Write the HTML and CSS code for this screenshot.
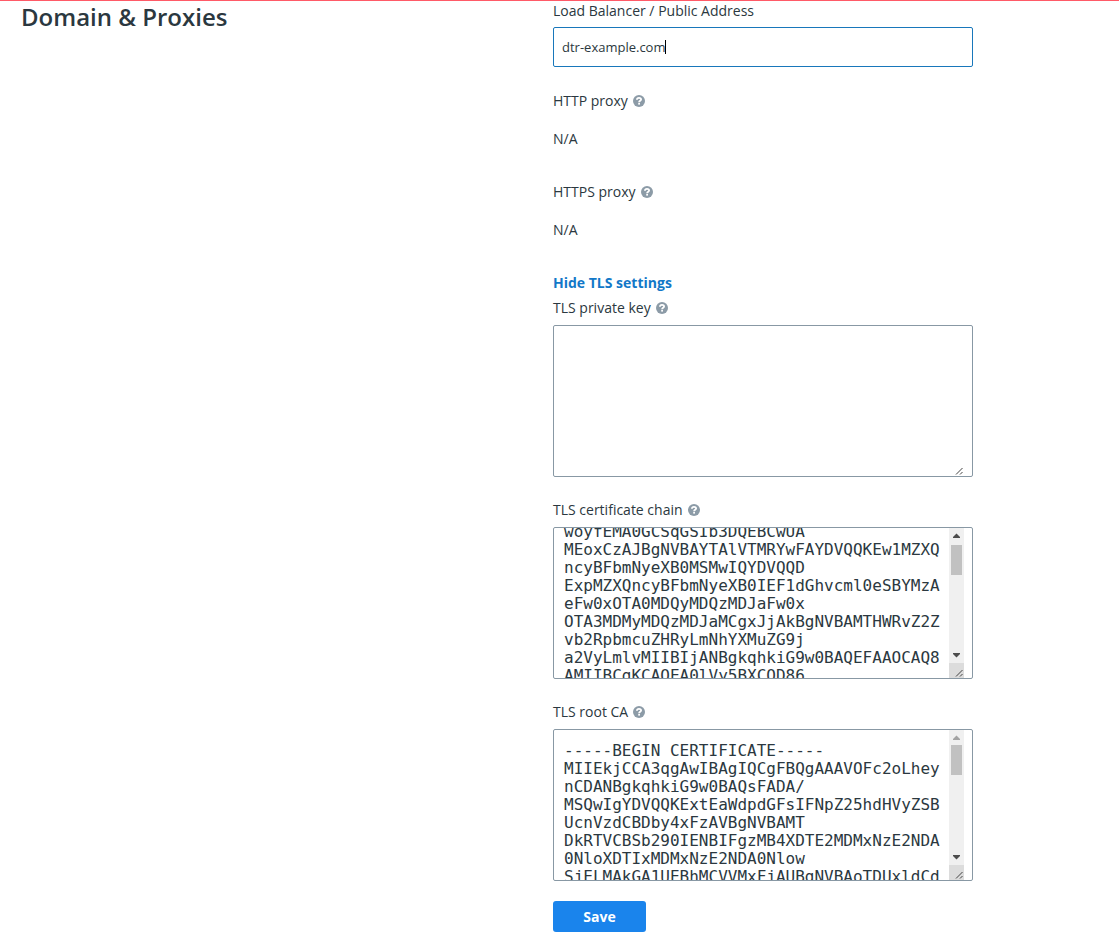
FILE: index.html
```html
<!DOCTYPE html>
<html lang="en">
<head>
<meta charset="utf-8">
<meta name="viewport" content="width=device-width, initial-scale=1">
<title>Domain &amp; Proxies</title>
<link rel="stylesheet" href="styles.css">
</head>
<body>
<svg class="sprite" aria-hidden="true">
  <symbol id="help" viewBox="0 0 12 12">
    <circle cx="6" cy="6" r="6" fill="#8c9ba7"/>
    <path d="M3.900 4.800C4 3.400 4.900 2.900 6 2.900c1.200 0 2.100.6 2.100 1.600 0 1.300-2 1.300-2 2.700" fill="none" stroke="#fff" stroke-width="1.800"/>
    <rect x="5.200" y="7.900" width="1.800" height="1.700" fill="#fff"/>
  </symbol>
  <symbol id="up" viewBox="0 0 15 15"><path d="M4 10h7v-1L7.500 5.500 4 9z"/></symbol>
  <symbol id="down" viewBox="0 0 15 15"><path d="M4 5h7v1L7.500 9.500 4 6z"/></symbol>
  <symbol id="grip" viewBox="0 0 15 15"><path d="M7 13.500L13.500 7M11 13.500l2.500-2.500" stroke="#444" fill="none"/></symbol>
</svg>
<main class="settings">
  <h1 class="title">Domain &amp; Proxies</h1>
  <form class="form">
    <div class="field">
      <label class="label" for="address">Load Balancer / Public Address</label>
      <div class="input-box">
        <input class="input" id="address" type="text" size="11" value="dtr-example.com">
        <span class="caret"></span>
      </div>
    </div>
    <div class="readout">
      <p class="label">HTTP proxy <svg class="help"><use href="#help"/></svg></p>
      <p class="value">N/A</p>
    </div>
    <div class="readout">
      <p class="label">HTTPS proxy <svg class="help"><use href="#help"/></svg></p>
      <p class="value">N/A</p>
    </div>
    <a class="toggle" href="#tls">Hide TLS settings</a>
    <div class="field" id="tls">
      <label class="label" for="key">TLS private key <svg class="help"><use href="#help"/></svg></label>
      <div class="area">
        <textarea class="text" id="key"></textarea>
        <div class="bar bar-empty"><svg class="corner"><use href="#grip"/></svg></div>
      </div>
    </div>
    <div class="field">
      <label class="label" for="chain">TLS certificate chain <svg class="help"><use href="#help"/></svg></label>
      <div class="area">
        <textarea class="text" id="chain" spellcheck="false">woyfEMA0GCSqGSIb3DQEBCwUA
MEoxCzAJBgNVBAYTAlVTMRYwFAYDVQQKEw1MZXQ
ncyBFbmNyeXB0MSMwIQYDVQQD
ExpMZXQncyBFbmNyeXB0IEF1dGhvcml0eSBYMzA
eFw0xOTA0MDQyMDQzMDJaFw0x
OTA3MDMyMDQzMDJaMCgxJjAkBgNVBAMTHWRvZ2Z
vb2RpbmcuZHRyLmNhYXMuZG9j
a2VyLmlvMIIBIjANBgkqhkiG9w0BAQEFAAOCAQ8
AMIIBCgKCAQEA0lVy5BXCQD86</textarea>
        <div class="bar">
          <svg class="arrow"><use href="#up"/></svg>
          <div class="track track-scrolled"><div class="thumb"></div></div>
          <svg class="arrow"><use href="#down"/></svg>
          <svg class="corner"><use href="#grip"/></svg>
        </div>
      </div>
    </div>
    <div class="field">
      <label class="label" for="root">TLS root CA <svg class="help"><use href="#help"/></svg></label>
      <div class="area">
        <textarea class="text" id="root" spellcheck="false">-----BEGIN CERTIFICATE-----
MIIEkjCCA3qgAwIBAgIQCgFBQgAAAVOFc2oLhey
nCDANBgkqhkiG9w0BAQsFADA/
MSQwIgYDVQQKExtEaWdpdGFsIFNpZ25hdHVyZSB
UcnVzdCBDby4xFzAVBgNVBAMT
DkRTVCBSb290IENBIFgzMB4XDTE2MDMxNzE2NDA
0NloXDTIxMDMxNzE2NDA0Nlow
SjELMAkGA1UEBhMCVVMxFjAUBgNVBAoTDUxldCd</textarea>
        <div class="bar">
          <svg class="arrow arrow-off"><use href="#up"/></svg>
          <div class="track"><div class="thumb"></div></div>
          <svg class="arrow"><use href="#down"/></svg>
          <svg class="corner"><use href="#grip"/></svg>
        </div>
      </div>
    </div>
    <button class="save" type="button">Save</button>
  </form>
</main>
<script src="script.js"></script>
</body>
</html>
```

FILE: styles.css
```css
* {
  box-sizing: border-box;
}

body {
  margin: 0;
  border-top: 1px solid #ff5a67;
  background: #fff;
  color: #2b3840;
  font: 14px/20px "Open Sans", "Noto Sans", sans-serif;
}

.sprite {
  display: none;
}

.settings {
  display: grid;
  grid-template-columns: 1fr 1fr;
  padding: 0 34px 0 21px;
}

.title {
  margin: 0;
  font-size: 24px;
  font-weight: 600;
  line-height: 32px;
}

.form {
  display: flex;
  flex-direction: column;
  align-items: flex-start;
  max-width: 420px;
}

.field {
  display: flex;
  flex-direction: column;
  gap: 7px;
  width: 100%;
  margin-bottom: 23px;
}

.field:last-of-type {
  margin-bottom: 20px;
}

.field:first-child {
  gap: 6px;
  margin-bottom: 24px;
}

.label {
  display: flex;
  align-items: center;
  gap: 5px;
  margin: 0;
}

.help {
  width: 12px;
  height: 12px;
}

.input-box {
  display: flex;
  align-items: center;
  height: 40px;
  padding: 0 8px;
  border: 1px solid #1877bb;
  border-radius: 2px;
}

.input {
  field-sizing: content;
  padding: 0;
  border: 0;
  outline: 0;
  background: none;
  color: inherit;
  font: 13px/18px "Open Sans", "Noto Sans", sans-serif;
}

.caret {
  width: 1px;
  height: 14px;
  background: #000;
}

.readout {
  display: flex;
  flex-direction: column;
  gap: 18px;
  margin-bottom: 33px;
}

.value {
  margin: 0;
}

.toggle {
  margin-bottom: 5px;
  color: #1278c8;
  font-weight: 700;
  text-decoration: none;
}

.area {
  display: flex;
  height: 152px;
  padding-right: 8px;
  border: 1px solid #8898a4;
  border-radius: 2px;
}

.text {
  flex: 1;
  min-width: 0;
  padding: 12px 0 12px 10px;
  border: 0;
  outline: 0;
  resize: none;
  background: none;
  color: inherit;
  font: 16px/18px "DejaVu Sans Mono", monospace;
  white-space: pre-wrap;
  scrollbar-width: none;
}

.bar {
  display: flex;
  flex-direction: column;
  width: 15px;
  background: #f0f0f0;
}

.bar-empty {
  justify-content: flex-end;
  background: none;
}

.arrow,
.corner {
  flex: none;
  width: 15px;
  height: 15px;
  fill: #4d4d4d;
}

.arrow-off {
  fill: #a3a3a3;
}

.corner {
  background: #dcdcdc;
}

.bar-empty .corner {
  background: none;
}

.track {
  flex: 1;
  padding: 0 2px;
}

.track-scrolled {
  padding-top: 2px;
}

.thumb {
  height: 30px;
  background: #c1c1c1;
}

.save {
  min-width: 93px;
  height: 31px;
  padding: 0 24px;
  border: 0;
  border-radius: 3px;
  background: #1a84ec;
  color: #fff;
  font: 700 14px/20px "Open Sans", "Noto Sans", sans-serif;
}
```

FILE: script.js
```js
// Open the certificate chain about one line down.
document.getElementById("chain").scrollTop = 17;
```
